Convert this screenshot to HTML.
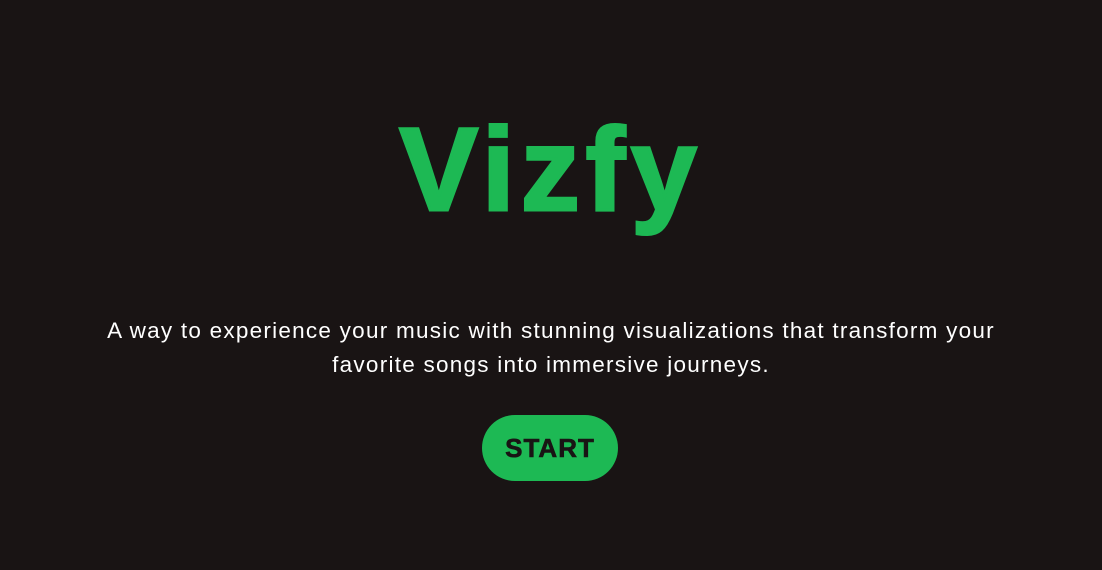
<!DOCTYPE html>
<html><head><style>
html,body{margin:0;padding:0;width:1102px;height:570px;background:#191414;overflow:hidden}
body{position:relative;font-family:"Liberation Sans",sans-serif}
.t{position:absolute;left:0;width:1102px;text-align:center;white-space:nowrap}
#title{top:105px;font-size:118px;font-weight:bold;color:#1DB954;letter-spacing:6px;line-height:130px;-webkit-text-stroke:3px #1DB954}
.p{color:#fff;font-size:22.5px;line-height:34px;letter-spacing:1.25px}
#btn{position:absolute;left:482px;top:415px;width:136px;height:66px;border-radius:33px;background:#1DB954;color:#191414;font-weight:900;font-size:26px;line-height:66px;text-align:center;letter-spacing:1px;-webkit-text-stroke:0.6px #191414}
</style></head><body>
<div class="t" id="title">Vizfy</div>
<div class="t p" style="top:314px">A way to experience your music with stunning visualizations that transform your</div>
<div class="t p" style="top:348px">favorite songs into immersive journeys.</div>
<div id="btn">START</div>
</body></html>
